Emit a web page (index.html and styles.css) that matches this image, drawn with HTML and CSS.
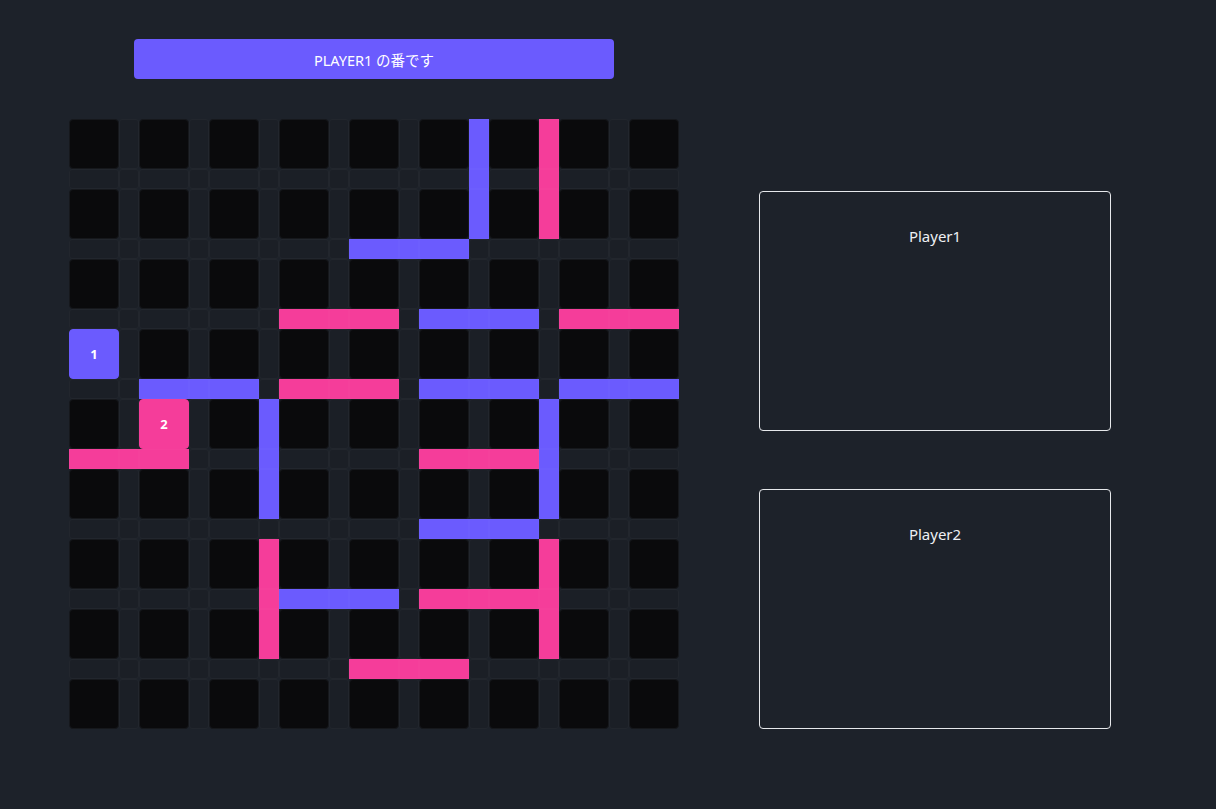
FILE: index.html
```html
<!DOCTYPE html>
<html lang="ja">
<head>
<meta charset="utf-8">
<title>Quoridor</title>
<link rel="stylesheet" href="styles.css">
</head>
<body>
<main class="page">
  <section class="game">
    <div class="turn">PLAYER1 の番です</div>
    <div class="board" id="board"></div>
  </section>
  <aside class="players">
    <div class="player-card"><div class="player-name">Player1</div></div>
    <div class="player-card"><div class="player-name">Player2</div></div>
  </aside>
</main>
<script src="script.js"></script>
</body>
</html>
```
FILE: styles.css
```css
* { box-sizing: border-box; }
html, body { margin: 0; padding: 0; }
body {
  background: #1d222a;
  font-family: "Noto Sans", "Noto Sans CJK JP", sans-serif;
  color: #eef0f3;
  width: 1216px;
  height: 809px;
  overflow: hidden;
}
.page {
  display: flex;
  align-items: flex-end;
  padding: 39px 0 0 69px;
}
.game {
  display: flex;
  flex-direction: column;
  align-items: center;
  gap: 40px;
  width: 610px;
}
.turn {
  width: 480px;
  height: 40px;
  background: #6b5bfe;
  border-radius: 4px;
  color: #ffffff;
  font-size: 14.5px;
  display: flex;
  align-items: center;
  justify-content: center;
}
.board {
  display: grid;
  grid-template-columns: repeat(8, 50px 20px) 50px;
  grid-template-rows: repeat(8, 50px 20px) 50px;
}
.cell {
  background: #0a0a0c;
  border: 1px solid #16181c;
  border-radius: 4px;
}
.gap {
  background: #1b1f26;
  border: 1px solid #22262d;
  border-radius: 3px;
}
.wall-blue {
  background: #6b5bfe;
  border: 1px solid rgba(255,255,255,0.02);
  border-radius: 0;
}
.wall-pink {
  background: #f53d9a;
  border: 1px solid rgba(255,255,255,0.02);
  border-radius: 0;
}
.piece {
  display: flex;
  align-items: center;
  justify-content: center;
  color: #ffffff;
  font-weight: 700;
  font-size: 13px;
  border-radius: 4px;
}
.piece-1 { background: #6b5bfe; border: 1px solid #6b5bfe; }
.piece-2 { background: #f53d9a; border: 1px solid #f53d9a; }
.players {
  display: flex;
  flex-direction: column;
  gap: 58px;
  margin-left: 80px;
}
.player-card {
  width: 352px;
  height: 240px;
  border: 1px solid #e6e8eb;
  border-radius: 4px;
  padding-top: 33px;
}
.player-name {
  text-align: center;
  font-size: 15px;
  line-height: 22px;
}
```
FILE: script.js
```js
(function () {
  var board = document.getElementById('board');
  var walls = {};
  function hWall(r, c0, c1, color) { for (var c = c0; c <= c1; c++) walls[r + ',' + c] = color; }
  function vWall(c, r0, r1, color) { for (var r = r0; r <= r1; r++) walls[r + ',' + c] = color; }
  vWall(11, 0, 2, 'blue');
  vWall(13, 0, 2, 'pink');
  hWall(3, 8, 10, 'blue');
  hWall(5, 6, 8, 'pink');
  hWall(5, 10, 12, 'blue');
  hWall(5, 14, 16, 'pink');
  hWall(7, 2, 4, 'blue');
  hWall(7, 6, 8, 'pink');
  hWall(7, 10, 12, 'blue');
  hWall(7, 14, 16, 'blue');
  vWall(5, 8, 10, 'blue');
  vWall(13, 8, 10, 'blue');
  hWall(9, 0, 2, 'pink');
  hWall(9, 10, 12, 'pink');
  hWall(11, 10, 12, 'blue');
  vWall(5, 12, 14, 'pink');
  vWall(13, 12, 14, 'pink');
  hWall(13, 6, 8, 'blue');
  hWall(13, 10, 12, 'pink');
  hWall(15, 8, 10, 'pink');
  var pieces = { '6,0': 1, '8,2': 2 };
  for (var r = 0; r < 17; r++) {
    for (var c = 0; c < 17; c++) {
      var d = document.createElement('div');
      var key = r + ',' + c;
      if (pieces[key]) {
        d.className = 'piece piece-' + pieces[key];
        d.textContent = pieces[key];
      } else if (walls[key]) {
        d.className = 'wall-' + walls[key];
      } else if (r % 2 === 0 && c % 2 === 0) {
        d.className = 'cell';
      } else {
        d.className = 'gap';
      }
      board.appendChild(d);
    }
  }
})();
```
